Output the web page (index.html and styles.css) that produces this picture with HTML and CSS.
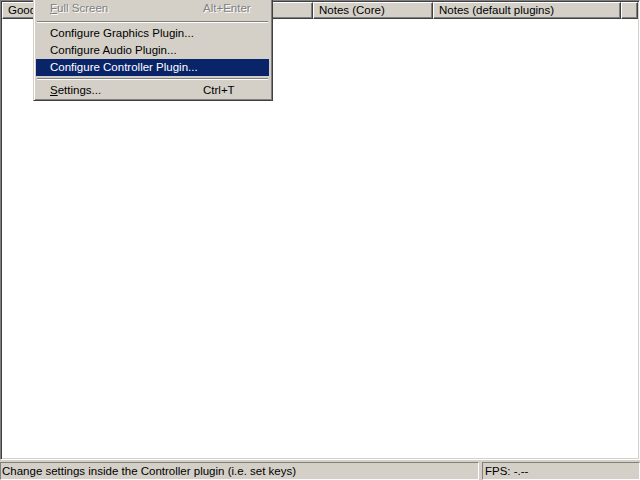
FILE: index.html
```html
<!DOCTYPE html>
<html lang="en">
<head>
    <meta charset="UTF-8">
    <title>Project64</title>
    <link rel="stylesheet" href="styles.css">
</head>
<body>
    <div class="window">
        <div class="list-view">
            <div class="list-header">
                <div class="col col-name">Good Name</div>
                <div class="col col-core">Notes (Core)</div>
                <div class="col col-plugins">Notes (default plugins)</div>
                <div class="col col-fill"></div>
            </div>
            <div class="list-body"></div>
        </div>

        <div class="status-bar">
            <div class="status-panel status-main">Change settings inside the Controller plugin (i.e. set keys)</div>
            <div class="status-panel status-fps">FPS: -.--</div>
        </div>

        <div class="popup-menu">
            <div class="menu-item disabled">
                <span class="menu-label"><u>F</u>ull Screen</span>
                <span class="menu-key">Alt+Enter</span>
            </div>
            <div class="menu-sep"></div>
            <div class="menu-item">
                <span class="menu-label">Configure Graphics Plugin...</span>
            </div>
            <div class="menu-item">
                <span class="menu-label">Configure Audio Plugin...</span>
            </div>
            <div class="menu-item selected">
                <span class="menu-label">Configure Controller Plugin...</span>
            </div>
            <div class="menu-sep short"></div>
            <div class="menu-item">
                <span class="menu-label"><u>S</u>ettings...</span>
                <span class="menu-key">Ctrl+T</span>
            </div>
        </div>
    </div>
</body>
</html>
```

FILE: styles.css
```css
:root {
    --face: #d4d0c8;
    --shadow: #808080;
    --dark: #404040;
    --light: #ffffff;
    --select: #0a246a;
}

* {
    box-sizing: border-box;
    margin: 0;
    padding: 0;
}

body {
    font-family: "Liberation Sans", Arial, sans-serif;
    font-size: 11.5px;
    color: #000;
    background-color: var(--face);
}

.window {
    position: relative;
    width: 640px;
    height: 480px;
    display: flex;
    flex-direction: column;
    overflow: hidden;
}

/* sunken list view */
.list-view {
    height: 460px;
    display: flex;
    flex-direction: column;
    padding: 1px;
    background-color: #fff;
    border-top: 1px solid var(--shadow);
    border-left: 1px solid var(--shadow);
    border-right: 1px solid var(--light);
    border-bottom: 1px solid var(--light);
    box-shadow: inset 1px 1px 0 var(--dark), inset -1px -1px 0 var(--face);
}

.list-view > * {
    flex-shrink: 0;
}

.list-header {
    display: flex;
    height: 17px;
}

.col {
    height: 17px;
    line-height: 15px;
    padding-left: 5px;
    white-space: nowrap;
    overflow: hidden;
    background-color: var(--face);
    border-top: 1px solid var(--light);
    border-left: 1px solid var(--light);
    border-right: 1px solid var(--dark);
    border-bottom: 1px solid var(--dark);
    box-shadow: inset -1px -1px 0 var(--shadow);
}

.col-name {
    width: 311px;
}

.col-core {
    width: 120px;
}

.col-plugins {
    width: 188px;
}

.col-fill {
    flex: 1;
}

.list-body {
    flex: 1;
}

/* status bar */
.status-bar {
    flex: 1;
    display: flex;
    gap: 3px;
    padding-top: 2px;
}

.status-panel {
    height: 18px;
    line-height: 16px;
    padding-left: 1px;
    white-space: nowrap;
    border-top: 1px solid var(--shadow);
    border-left: 1px solid var(--shadow);
    border-right: 1px solid var(--light);
    border-bottom: 1px solid var(--light);
}

.status-main {
    width: 479px;
}

.status-fps {
    flex: 1;
    padding-left: 2px;
}

/* popup menu */
.popup-menu {
    position: absolute;
    left: 33px;
    top: -3px;
    width: 240px;
    padding: 2px 3px 1px 2px;
    background-color: var(--face);
    border-top: 1px solid var(--face);
    border-left: 1px solid var(--face);
    border-right: 1px solid var(--dark);
    border-bottom: 1px solid var(--dark);
    box-shadow: inset 1px 1px 0 var(--light), inset -1px -1px 0 var(--shadow);
}

.menu-item {
    display: flex;
    height: 17px;
    line-height: 17px;
    padding-left: 14px;
    white-space: nowrap;
}

.menu-label {
    width: 153px;
}

.menu-key {
    flex: 1;
}

.menu-item.disabled {
    color: var(--shadow);
    text-shadow: 1px 1px 0 var(--light);
}

.menu-item.selected {
    background-color: var(--select);
    color: #fff;
}

.menu-sep {
    height: 8px;
    padding: 4px 1px 0;
}

.menu-sep.short {
    height: 6px;
    padding-top: 2px;
}

.menu-sep::before {
    content: "";
    display: block;
    border-top: 1px solid var(--shadow);
    border-bottom: 1px solid var(--light);
}
```
